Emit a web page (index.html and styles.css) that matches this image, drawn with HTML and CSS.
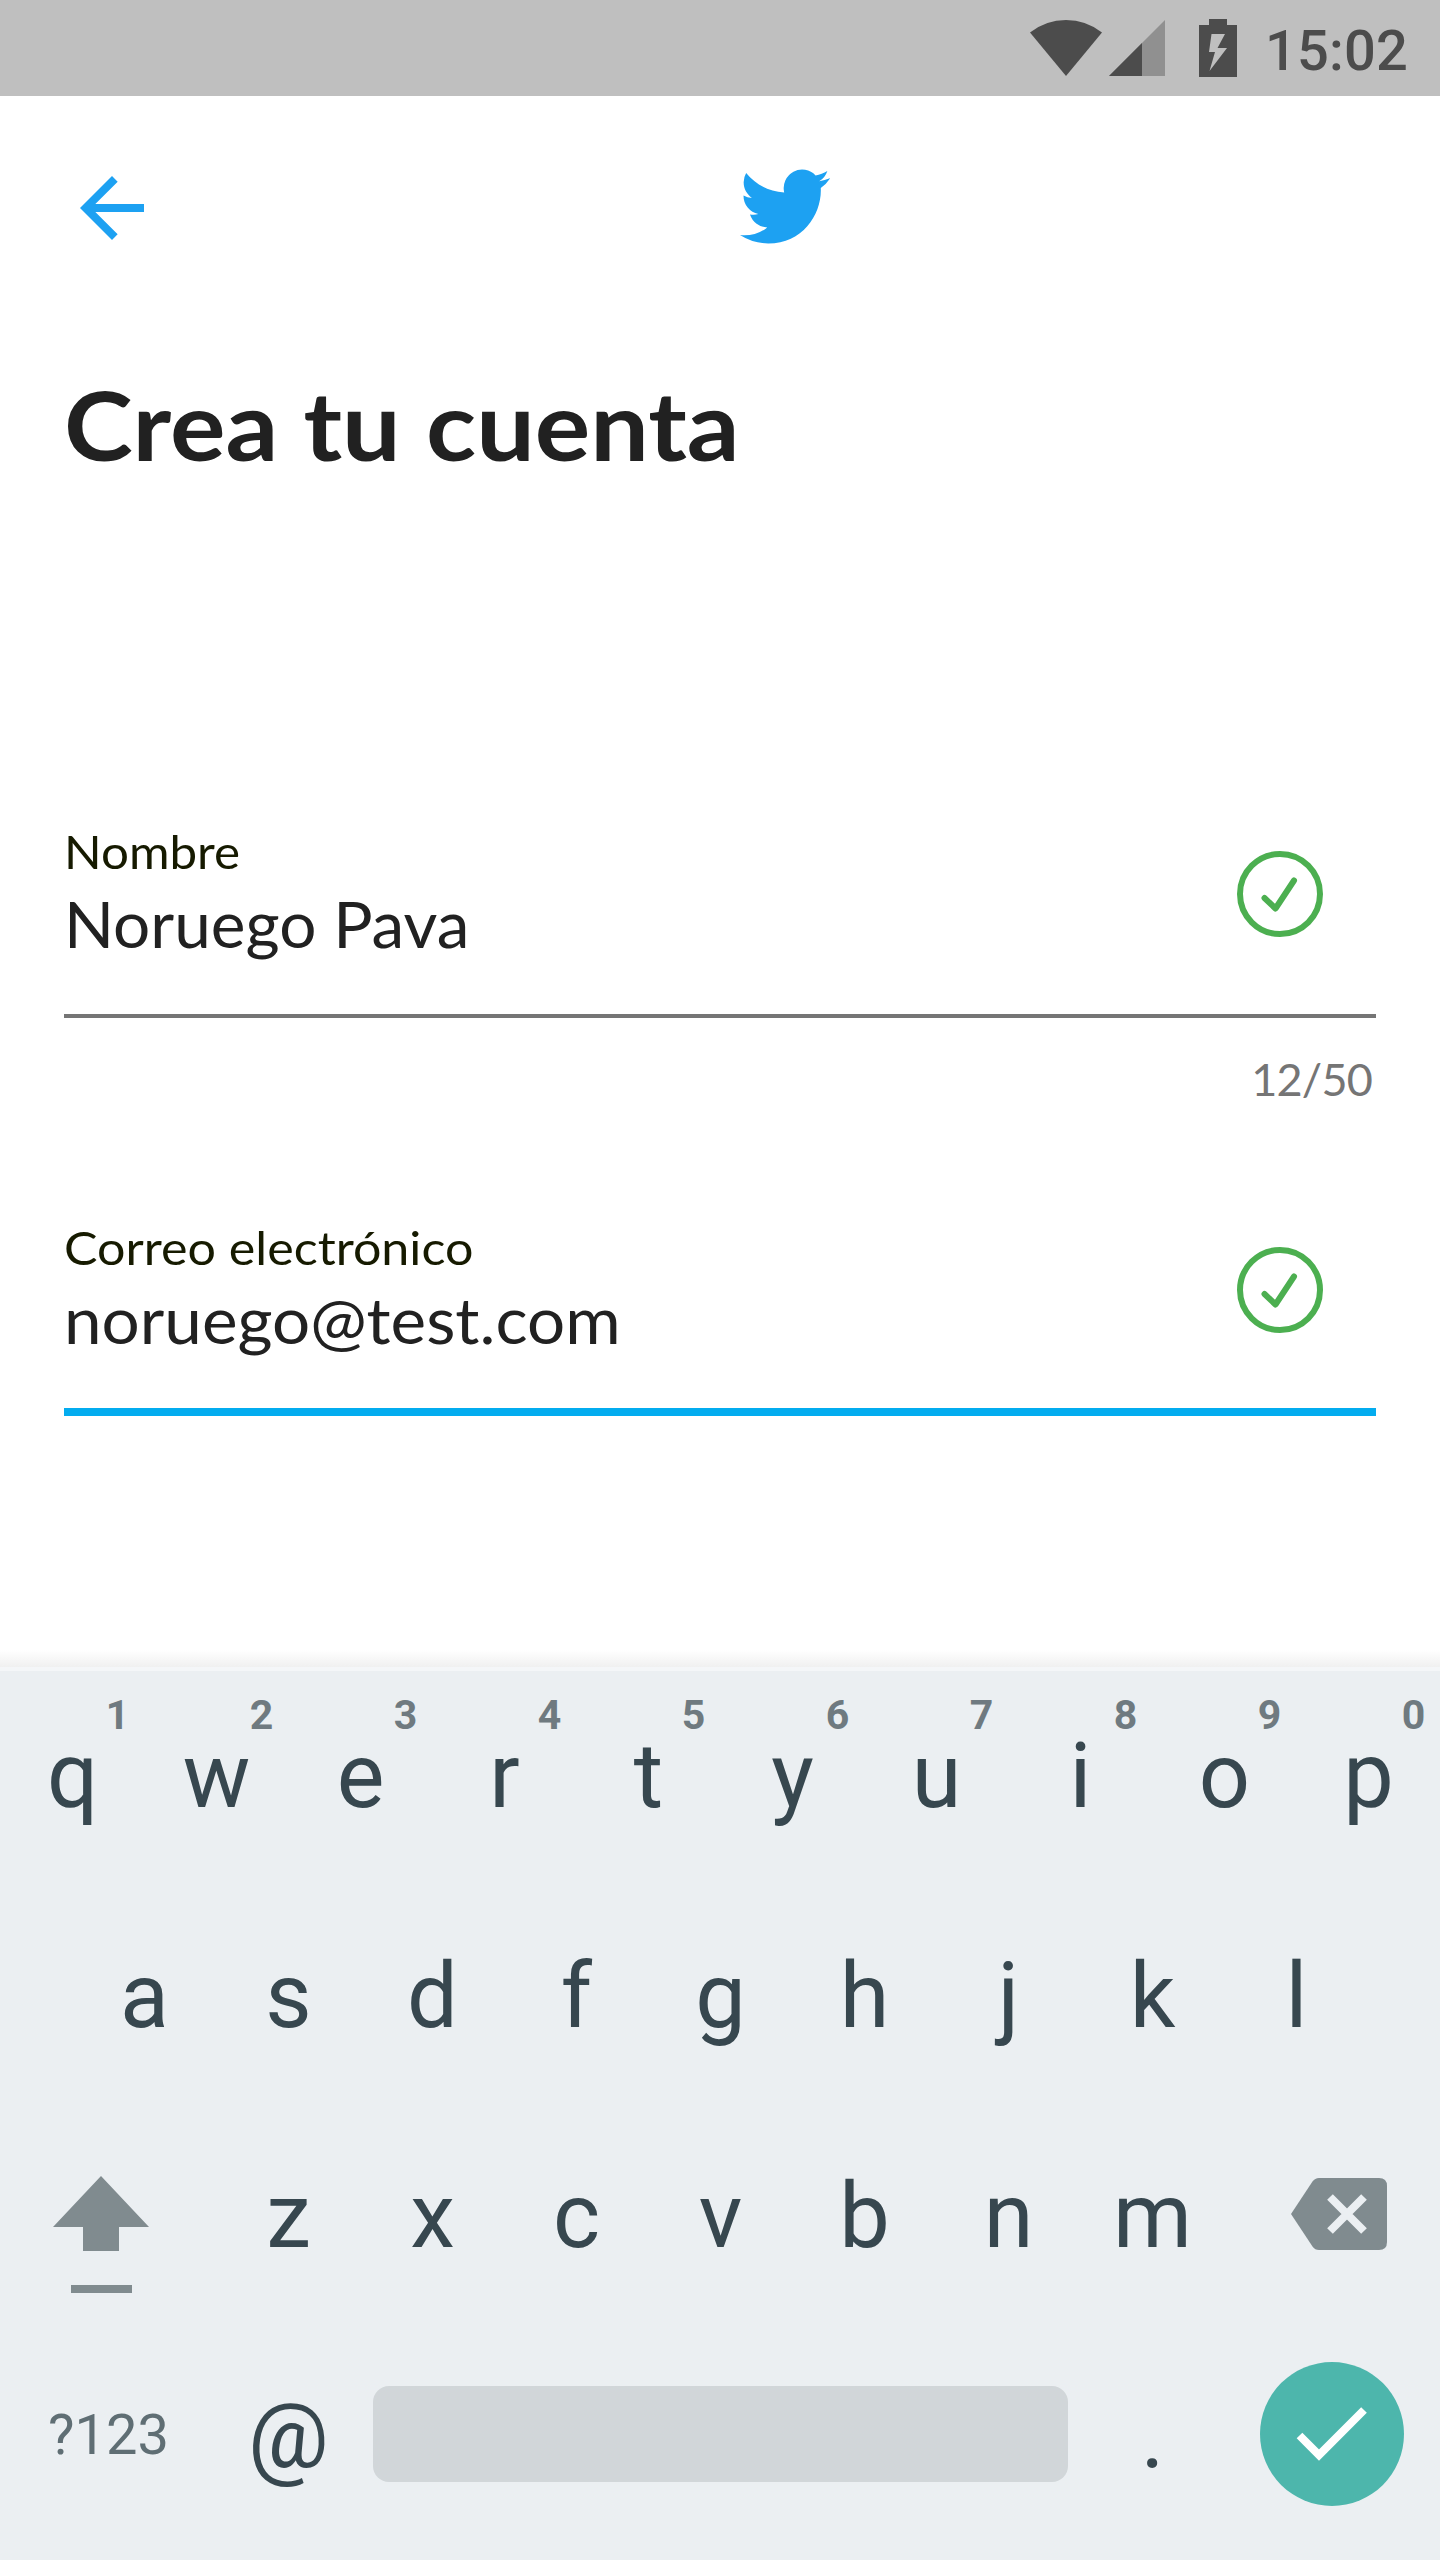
FILE: index.html
```html
<!DOCTYPE html>
<html lang="es">
<head>
<meta charset="utf-8">
<title>Crea tu cuenta</title>
<link rel="stylesheet" href="styles.css">
</head>
<body>
<div class="screen">
  <div class="status">
    <svg class="status-icons" viewBox="1020 0 230 96" width="230" height="96">
      <path fill="#4c4c4c" d="M1066 76L1030 32.500Q1046 20 1066 20T1102 32.500Z"/>
      <path fill="#909090" d="M1165 20V76H1109Z"/>
      <path fill="#4c4c4c" d="M1142 43V76H1109Z"/>
      <path fill="#4c4c4c" d="M1209 19H1227V25H1237V77H1199V25H1209Z"/>
      <path fill="#bfbfbf" d="M1211.500 34H1225L1217.500 48H1227L1209.500 71L1215 52H1209Z"/>
    </svg>
    <span class="clock">15:02</span>
  </div>
  <header class="topbar">
    <svg class="back" viewBox="0 0 24 24" width="96" height="96"><path fill="#1da1f2" d="M20 11H7.830l5.590-5.590L12 4l-8 8 8 8 1.410-1.410L7.830 13H20v-2z"/></svg>
    <svg class="logo" viewBox="0 0 24 24" width="90" height="91" preserveAspectRatio="none"><path fill="#1da1f2" d="M23.953 4.570a10 10 0 01-2.825.775 4.958 4.958 0 002.163-2.723c-.951.555-2.005.959-3.127 1.184a4.920 4.920 0 00-8.384 4.482C7.690 8.095 4.067 6.130 1.640 3.162a4.822 4.822 0 00-.666 2.475c0 1.710.870 3.213 2.188 4.096a4.904 4.904 0 01-2.228-.616v.060a4.923 4.923 0 003.946 4.827 4.996 4.996 0 01-2.212.085 4.936 4.936 0 004.604 3.417 9.867 9.867 0 01-6.102 2.105c-.390 0-.779-.023-1.170-.067a13.995 13.995 0 007.557 2.209c9.053 0 13.998-7.496 13.998-13.985 0-.210 0-.420-.015-.630A9.935 9.935 0 0024 4.590z"/></svg>
  </header>
  <main class="form">
    <h1 class="title">Crea tu cuenta</h1>
    <section class="field">
      <div class="field-text">
        <label class="label label-name">Nombre</label>
        <div class="value value-name">Noruego Pava</div>
      </div>
      <svg class="valid" viewBox="0 0 86 86" width="86" height="86"><circle cx="43" cy="43" r="40"/><path d="M27.500 47L38.500 57.500L57 29.500"/></svg>
    </section>
    <div class="counter">12/50</div>
    <section class="field field-active">
      <div class="field-text">
        <label class="label label-mail">Correo electrónico</label>
        <div class="value value-mail">noruego@test.com</div>
      </div>
      <svg class="valid" viewBox="0 0 86 86" width="86" height="86"><circle cx="43" cy="43" r="40"/><path d="M27.500 47L38.500 57.500L57 29.500"/></svg>
    </section>
  </main>
  <div class="shade"></div>
  <div class="keyboard">
    <div class="row">
      <div class="key">q<span class="hint">1</span></div><div class="key">w<span class="hint">2</span></div><div class="key">e<span class="hint">3</span></div><div class="key">r<span class="hint">4</span></div><div class="key">t<span class="hint">5</span></div><div class="key">y<span class="hint">6</span></div><div class="key">u<span class="hint">7</span></div><div class="key">i<span class="hint">8</span></div><div class="key">o<span class="hint">9</span></div><div class="key">p<span class="hint">0</span></div>
    </div>
    <div class="row">
      <div class="key">a</div><div class="key">s</div><div class="key">d</div><div class="key">f</div><div class="key">g</div><div class="key">h</div><div class="key">j</div><div class="key">k</div><div class="key">l</div>
    </div>
    <div class="row">
      <div class="key key-wide"><svg viewBox="0 0 216 220" width="216" height="220"><path fill="#808b8f" d="M101 70L149 121H119V145H83V121H53Z"/><path fill="#808b8f" d="M71 179H132V187H71Z"/></svg></div>
      <div class="key">z</div><div class="key">x</div><div class="key">c</div><div class="key">v</div><div class="key">b</div><div class="key">n</div><div class="key">m</div>
      <div class="key key-wide"><svg viewBox="1224 0 216 220" width="216" height="220"><path fill="#808b8f" d="M1291 108L1312.500 75.500Q1315 72 1319 72H1379Q1387 72 1387 80V136Q1387 144 1379 144H1319Q1315 144 1312.500 140.500Z"/><path fill="none" stroke="#ebeff2" stroke-width="8" d="M1330 91L1364 125M1364 91L1330 125"/></svg></div>
    </div>
    <div class="row">
      <div class="key key-wide symbols">?123</div>
      <div class="key">@</div>
      <div class="space-slot"><div class="space"></div></div>
      <div class="key">.</div>
      <div class="key key-wide"><svg viewBox="1224 0 216 220" width="216" height="220"><circle cx="1332" cy="108" r="72" fill="#4db6ac"/><path fill="none" stroke="#fff" stroke-width="8" d="M1299.500 109.500L1319 129L1364 84"/></svg></div>
    </div>
  </div>
</div>
</body>
</html>
```
FILE: styles.css
```css
* { box-sizing: border-box; }
body { margin: 0; background: #fff; }
svg { display: block; flex: none; }

.screen {
  width: 1440px;
  height: 2560px;
  display: flex;
  flex-direction: column;
  overflow: hidden;
  background: #fff;
  font-family: Lato, sans-serif;
  color: #212121;
}

.status {
  height: 96px;
  flex: none;
  display: flex;
  justify-content: flex-end;
  padding-right: 32px;
  background: #bfbfbf;
}
.status-icons { margin-right: 15px; }
.clock {
  font: 500 56px/102px Roboto, sans-serif;
  color: #4c4c4c;
  width: 143px;
  letter-spacing: 0.2px;
  white-space: nowrap;
}

.topbar {
  height: 224px;
  flex: none;
  display: flex;
  align-items: center;
  padding-left: 64px;
}
.logo { margin: -3px 0 0 580px; }

.form { flex: none; height: 1330px; padding: 0 64px; }
.title {
  margin: 0;
  padding-top: 46px;
  font-size: 96px;
  line-height: 116px;
  font-weight: 700;
  transform: scaleX(1.083);
  transform-origin: left;
  height: 497px;
  white-space: nowrap;
}
.field {
  display: flex;
  justify-content: space-between;
  height: 201px;
  padding-right: 53px;
  border-bottom: 4px solid #757575;
}
.field-active { border-bottom: 8px solid #03acef; height: 203px; }
.field-text { padding-top: 4px; }
.label { display: block; font-size: 47px; line-height: 60px; color: #161a00; transform-origin: left; }
.value { font-size: 64px; line-height: 86px; white-space: nowrap; transform-origin: left; }
.label-name { transform: scaleX(1.05); }
.label-mail { transform: scaleX(1.068); }
.value-name { transform: scaleX(1.026); }
.value-mail { transform: scaleX(1.053); }
.valid { margin-top: 34px; fill: none; stroke: #4caf50; stroke-width: 6; stroke-linecap: round; stroke-linejoin: round; }
.counter {
  height: 195px;
  padding: 34px 4px 0 0;
  text-align: right;
  font-size: 45px;
  line-height: 54px;
  letter-spacing: -0.8px;
  color: #757575;
}

.shade { height: 17px; flex: none; background: linear-gradient(#fff, #f0f0f0); }
.keyboard {
  flex: none;
  height: 893px;
  border-top: 4px solid #f4f6f8;
  background: #ebeff2;
  font: 400 90px/222px Roboto, sans-serif;
  color: #37474f;
}
.row { display: flex; justify-content: center; height: 220px; }
.row:first-child { margin-top: -5px; }
.key { position: relative; width: 144px; flex: none; padding-left: 1px; text-align: center; }
.key-wide { width: 216px; padding-left: 0; }
.hint {
  position: absolute;
  left: 98px;
  top: 24px;
  width: 39px;
  font-size: 41px;
  line-height: 50px;
  font-weight: 700;
  color: #6f7a80;
}
.symbols { padding-left: 1px; font-size: 56px; line-height: 218px; color: #5f6e74; }
.space-slot { width: 720px; padding: 60px 12px 0 13px; }
.space { height: 96px; border-radius: 16px; background: #d1d6d9; }
```
